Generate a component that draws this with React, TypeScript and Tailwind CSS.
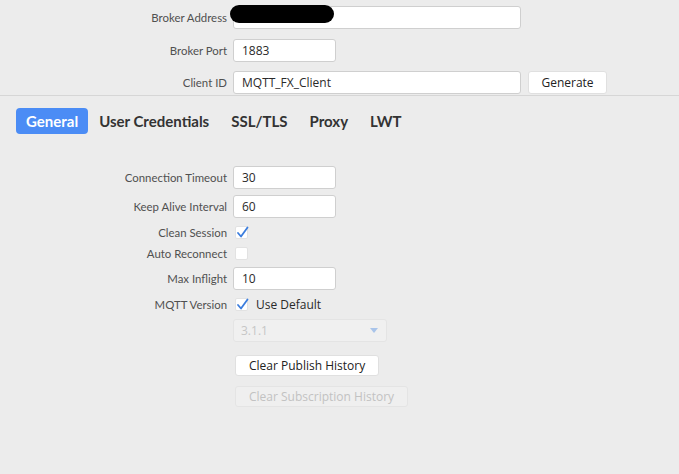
import { ReactNode } from "react";

const label = "text-right text-[11.4px] text-[#505050] [font-family:Lato,sans-serif] leading-none";
const inputBox =
  "h-[23px] bg-white border border-[#cfcfcf] rounded-[3px] pl-[8px] flex items-center text-[12px] text-[#2a2a2a] [font-family:'Open_Sans',sans-serif]";

function Row({ name, children, className = "" }: { name: string; children: ReactNode; className?: string }) {
  return (
    <div className={`flex items-center ${className}`}>
      <div className={`w-[227px] shrink-0 ${label}`}>{name}</div>
      <div className="ml-[6px] flex items-center">{children}</div>
    </div>
  );
}

function Check({ checked }: { checked: boolean }) {
  return (
    <div className="ml-[2px] w-[13px] h-[13px] bg-white border border-[#e2e2e2] rounded-[2px] relative">
      {checked && (
        <svg className="absolute -left-[1px] -top-[2px]" width="15" height="15" viewBox="0 0 15 15">
          <path d="M3 8 L6 11.5 L12.5 2.5" fill="none" stroke="#3b7ddd" strokeWidth="1.8" strokeLinecap="round" strokeLinejoin="round" />
        </svg>
      )}
    </div>
  );
}

export default function App() {
  const tabs = ["General", "User Credentials", "SSL/TLS", "Proxy", "LWT"];

  return (
    <div className="w-[679px] h-[474px] bg-[#ececec] overflow-hidden">
      {/* connection header */}
      <div className="pt-[6px] pb-[1px] border-b border-[#d6d6d6]">
        <Row name="Broker Address">
          <div className={`${inputBox} w-[288px] h-[22px] relative`}>
            <div className="absolute -left-[4px] -top-[2px] w-[104px] h-[18px] bg-black rounded-full" />
          </div>
        </Row>
        <Row name="Broker Port" className="mt-[10px]">
          <div className={`${inputBox} w-[103px]`}>1883</div>
        </Row>
        <Row name="Client ID" className="mt-[9px]">
          <div className={`${inputBox} w-[288px]`}>MQTT_FX_Client</div>
          <button className="ml-[7px] h-[23px] w-[79px] bg-white border border-[#e0e0e0] rounded-[3px] text-[12px] text-[#222] [font-family:'Open_Sans',sans-serif]">
            Generate
          </button>
        </Row>
      </div>

      {/* tabs */}
      <div className="flex mt-[12px] ml-[16px]">
        {tabs.map((t, i) => (
          <div
            key={t}
            className={`h-[26px] flex items-center rounded-[4px] text-[15px] font-bold [font-family:Lato,sans-serif] ${
              i === 0 ? "px-[10px] bg-[#4b8cf5] text-white" : "px-[11px] text-[#333]"
            }`}
          >
            {t}
          </div>
        ))}
      </div>

      {/* general form */}
      <div className="mt-[32px] flex flex-col">
        <Row name="Connection Timeout">
          <div className={`${inputBox} w-[103px]`}>30</div>
        </Row>
        <Row name="Keep Alive Interval" className="mt-[6px]">
          <div className={`${inputBox} w-[103px]`}>60</div>
        </Row>
        <Row name="Clean Session" className="mt-[8px] h-[13px]">
          <Check checked />
        </Row>
        <Row name="Auto Reconnect" className="mt-[8px] h-[13px]">
          <Check checked={false} />
        </Row>
        <Row name="Max Inflight" className="mt-[7px]">
          <div className={`${inputBox} w-[103px]`}>10</div>
        </Row>
        <Row name="MQTT Version" className="mt-[8px] h-[13px]">
          <Check checked />
          <span className="ml-[8px] text-[12px] text-[#2a2a2a] [font-family:'Open_Sans',sans-serif]">Use Default</span>
        </Row>
        <Row name="" className="mt-[8px]">
          <div className="w-[154px] h-[23px] bg-[#f0f0f0] border border-[#e4e4e4] rounded-[3px] flex items-center justify-between pl-[7px] pr-[8px]">
            <span className="text-[12px] text-[#c6c6c6] [font-family:'Open_Sans',sans-serif]">3.1.1</span>
            <svg width="8" height="5" viewBox="0 0 8 5">
              <path d="M0 0 H8 L4 5 Z" fill="#a9c4ea" />
            </svg>
          </div>
        </Row>
        <Row name="" className="mt-[13px]">
          <button className="ml-[2px] h-[21px] px-[13px] bg-white border border-[#e0e0e0] rounded-[3px] text-[12px] text-[#222] [font-family:'Open_Sans',sans-serif]">
            Clear Publish History
          </button>
        </Row>
        <Row name="" className="mt-[10px]">
          <button className="ml-[2px] h-[21px] px-[13px] bg-[#efefef] border border-[#e4e4e4] rounded-[3px] text-[12px] text-[#c2c2c2] [font-family:'Open_Sans',sans-serif]">
            Clear Subscription History
          </button>
        </Row>
      </div>
    </div>
  );
}
